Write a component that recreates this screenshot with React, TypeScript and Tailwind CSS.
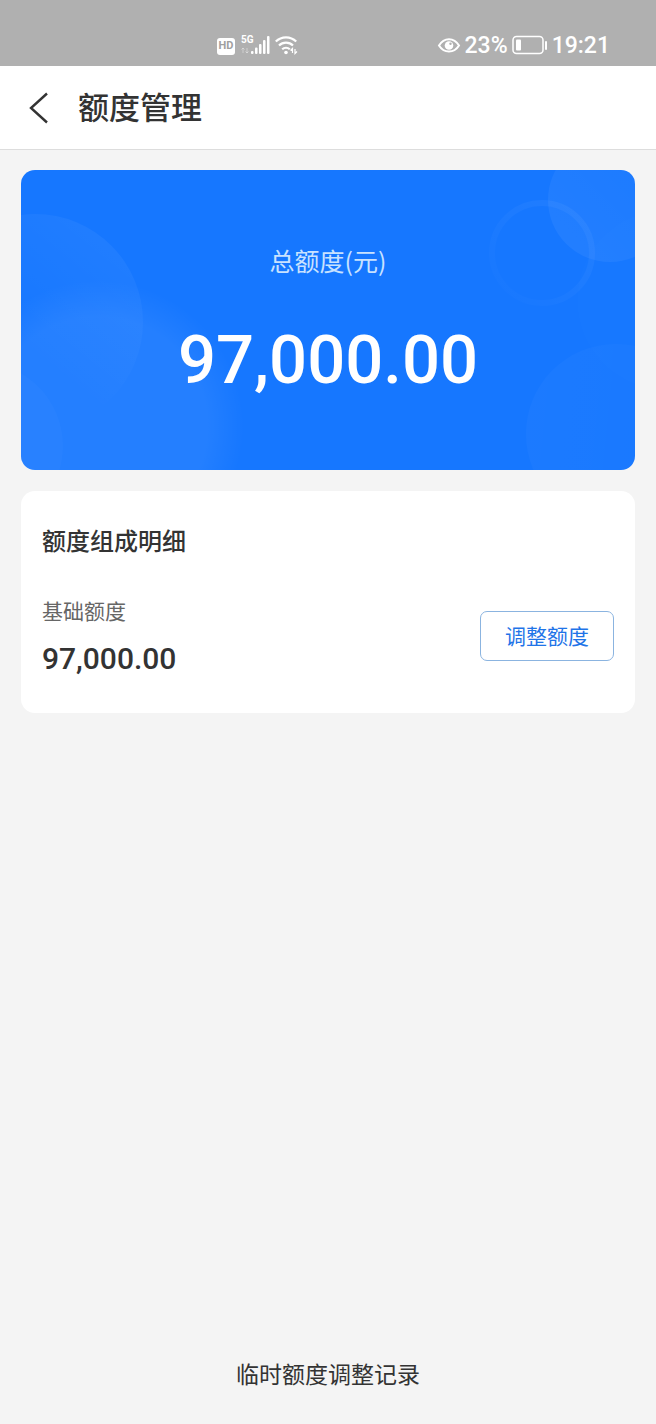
import type { ReactNode } from "react";

function StatusBar() {
  return (
    <div className="flex h-[66px] items-end justify-between bg-[#b0b0b0] pb-2 pr-[46px] pl-[217px] text-white">
      <div className="flex h-6 items-center gap-1">
        <span className="flex h-[17px] w-[18px] items-center justify-center rounded-[3px] bg-white font-['Roboto',sans-serif] text-[11px] font-bold text-[#a0a0a0]">
          HD
        </span>
        <div className="relative flex h-6 w-[32px] items-center">
          <span className="absolute top-px left-[2px] font-['Roboto',sans-serif] text-[10px] leading-[10px] font-bold">5G</span>
          <svg width="32" height="24" viewBox="0 0 32 24" fill="currentColor" aria-hidden="true">
            <path d="M4 14v5M2.500 15.500 4 14l1.500 1.500M8 14v5M6.500 17.500 8 19l1.500-1.500" fill="none" stroke="currentColor" strokeWidth="1" opacity="0.4" />
            <rect x="12" y="17" width="2.500" height="3" rx="1" />
            <rect x="16" y="13.500" width="2.500" height="6.500" rx="1" />
            <rect x="20" y="10" width="2.500" height="10" rx="1" />
            <rect x="24" y="6" width="2.500" height="14" rx="1" />
            <rect x="28" y="2" width="2.500" height="18" rx="1" />
          </svg>
        </div>
        <svg width="24" height="24" viewBox="0 0 24 24" fill="none" stroke="currentColor" aria-hidden="true">
          <path d="M.8 7.500a14.500 14.500 0 0 1 20.400 0M4 11.500a10 10 0 0 1 14 0M7.200 15.300a5.600 5.600 0 0 1 7.600 0" strokeWidth="2.200" />
          <circle cx="11" cy="18.500" r="1.800" fill="currentColor" stroke="none" />
          <path d="M17.500 19v-4.500l-2 2M20 15v4.500l2-2" strokeWidth="1.200" />
        </svg>
      </div>
      <div className="flex h-6 items-center gap-1 font-['Roboto',sans-serif] text-[23px] leading-6">
        <svg width="24" height="24" viewBox="0 0 24 24" fill="none" stroke="currentColor" aria-hidden="true">
          <path d="M2 11.500C7 3 17 3 22 11.500 17 19.500 7 19.500 2 11.500Z" strokeWidth="2" />
          <circle cx="12" cy="11.500" r="4.300" fill="currentColor" stroke="none" />
          <circle cx="13.500" cy="9.800" r="1.200" fill="#b0b0b0" stroke="none" />
        </svg>
        <span className="font-medium">23%</span>
        <svg width="36" height="24" viewBox="0 0 36 24" fill="currentColor" aria-hidden="true">
          <rect x="1" y="2.500" width="30" height="17" rx="3.500" fill="none" stroke="currentColor" strokeWidth="1.500" />
          <rect x="4" y="5.500" width="5" height="11" rx="1" />
          <rect x="33" y="7" width="2" height="9" rx="1" />
        </svg>
        <span className="font-medium">19:21</span>
      </div>
    </div>
  );
}

function CardBubbles() {
  return (
    <svg
      className="absolute inset-0 h-full w-full"
      viewBox="0 0 614 300"
      preserveAspectRatio="none"
      aria-hidden="true"
    >
      <defs>
        <linearGradient id="bubble" x1="1" y1="0" x2="0.200" y2="1">
          <stop offset="0" stopColor="#fff" stopOpacity="0.060" />
          <stop offset="0.650" stopColor="#fff" stopOpacity="0" />
        </linearGradient>
        <linearGradient id="corner" x1="0" y1="1" x2="1" y2="0">
          <stop offset="0" stopColor="#fff" stopOpacity="0.060" />
          <stop offset="1" stopColor="#fff" stopOpacity="0.020" />
        </linearGradient>
        <linearGradient id="faint" x1="0" y1="0.500" x2="1" y2="0.600">
          <stop offset="0" stopColor="#fff" stopOpacity="0.025" />
          <stop offset="1" stopColor="#fff" stopOpacity="0.010" />
        </linearGradient>
        <linearGradient id="ring" x1="1" y1="0" x2="0" y2="1">
          <stop offset="0" stopColor="#fff" stopOpacity="0.050" />
          <stop offset="1" stopColor="#fff" stopOpacity="0.005" />
        </linearGradient>
        <radialGradient id="glow">
          <stop offset="0" stopColor="#fff" stopOpacity="0.060" />
          <stop offset="0.750" stopColor="#fff" stopOpacity="0.060" />
          <stop offset="1" stopColor="#fff" stopOpacity="0" />
        </radialGradient>
      </defs>
      <circle cx="14" cy="152" r="108" fill="url(#bubble)" />
      <circle cx="77" cy="256" r="146" fill="url(#glow)" />
      <circle cx="-42" cy="276" r="84" fill="#fff" fillOpacity="0.020" />
      <circle cx="589" cy="30" r="62" fill="url(#corner)" />
      <circle cx="521" cy="83" r="50" fill="none" stroke="url(#ring)" strokeWidth="6" />
      <circle cx="646" cy="130" r="90" fill="#fff" fillOpacity="0.008" />
      <circle cx="595" cy="264" r="90" fill="url(#faint)" />
    </svg>
  );
}

function Card({ className, children }: { className: string; children: ReactNode }) {
  return <section className={`relative overflow-hidden rounded-[14px] ${className}`}>{children}</section>;
}

export default function App() {
  return (
    <div className="flex min-h-screen flex-col bg-[#f4f4f4] font-['Noto_Sans_CJK_SC',sans-serif] text-[#333333]">
      <StatusBar />

      <header className="flex h-[84px] items-center gap-7 border-b border-[#dddddd] bg-white px-7">
        <button type="button" aria-label="返回" className="cursor-pointer">
          <svg width="22" height="32" viewBox="0 0 22 32" fill="none" stroke="currentColor" strokeWidth="2.400" aria-hidden="true">
            <path d="M19 1.500 3 16l16 14.500" />
          </svg>
        </button>
        <h1 className="pb-[3px] text-[31px] leading-10 font-medium">额度管理</h1>
      </header>

      <main className="flex flex-1 flex-col gap-[21px] px-[21px] pt-5">
        {/* Total limit */}
        <Card className="h-[300px] bg-[#1677ff] text-white">
          <CardBubbles />
          <div className="relative flex flex-col items-center pt-[72px]">
            <div className="text-[25px] leading-9 text-[#c8e2ff]">总额度(元)</div>
            <div className="mt-[42px] font-['Roboto',sans-serif] text-[67px] leading-[80px] font-medium">97,000.00</div>
          </div>
        </Card>

        {/* Breakdown */}
        <Card className="bg-white px-[21px] pt-[31px] pb-[35px]">
          <h2 className="text-[24px] leading-9 font-medium">额度组成明细</h2>
          <div className="mt-9 flex items-center justify-between">
            <div>
              <div className="text-[21px] leading-8 text-[#666666]">基础额度</div>
              <div className="mt-[14px] font-['Roboto',sans-serif] text-[30px] leading-[38px] font-medium">97,000.00</div>
            </div>
            <button
              type="button"
              className="h-[50px] cursor-pointer rounded-[7px] border border-[#8bb4e0] px-6 pb-[2px] text-[21px] leading-8 text-[#1f74e8]"
            >
              调整额度
            </button>
          </div>
        </Card>
      </main>

      <footer className="pb-[33px] text-center">
        <a href="#records" className="text-[23px] leading-9">
          临时额度调整记录
        </a>
      </footer>
    </div>
  );
}
